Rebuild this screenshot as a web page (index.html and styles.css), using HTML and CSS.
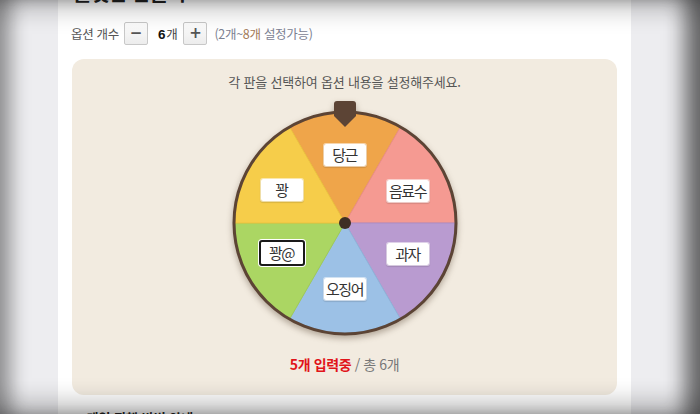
FILE: index.html
```html
<!DOCTYPE html>
<html lang="ko">
<head>
<meta charset="utf-8">
<title>룰렛</title>
<link rel="stylesheet" href="styles.css">
</head>
<body>
<div class="card">
  <h2 class="title">룰렛판 만들기</h2>
  <div class="options">
    <span class="opt-label">옵션 개수</span>
    <button class="step">&#8722;</button>
    <span class="count"><b>6</b>개</span>
    <button class="step">+</button>
    <span class="hint">(2개~<em>8개</em> 설정가능)</span>
  </div>
  <div class="panel">
    <p class="guide">각 판을 선택하여 옵션 내용을 설정해주세요.</p>
    <div class="wheel">
      <svg class="wheel-svg" width="240" height="246" viewBox="0 0 240 246">
        <path d="M120 124 L65 28.74 A110 110 0 0 1 175 28.74 Z" fill="#efa54a" stroke="#e59a40" stroke-width="1"/>
        <path d="M120 124 L175 28.74 A110 110 0 0 1 230 124 Z" fill="#f59a92" stroke="#ea8d86" stroke-width="1"/>
        <path d="M120 124 L230 124 A110 110 0 0 1 175 219.26 Z" fill="#b99bd0" stroke="#ac8dc4" stroke-width="1"/>
        <path d="M120 124 L175 219.26 A110 110 0 0 1 65 219.26 Z" fill="#9cc1e6" stroke="#8fb4da" stroke-width="1"/>
        <path d="M120 124 L65 219.26 A110 110 0 0 1 10 124 Z" fill="#abd663" stroke="#a0cb58" stroke-width="1"/>
        <path d="M120 124 L10 124 A110 110 0 0 1 65 28.74 Z" fill="#f6cd4a" stroke="#ecc23f" stroke-width="1"/>
        <circle cx="120" cy="124" r="111" fill="none" stroke="#5c4435" stroke-width="3"/>
        <path d="M109 5 Q109 2 112 2 L128 2 Q131 2 131 5 L131 17 L120 28 L109 17 Z" fill="#5c4435"/>
        <circle cx="120" cy="124" r="6" fill="#3e2e24"/>
      </svg>
      <span class="tag t1">당근</span>
      <span class="tag t2">음료수</span>
      <span class="tag t3">과자</span>
      <span class="tag t4">오징어</span>
      <span class="tag t5 selected">꽝@</span>
      <span class="tag t6">꽝</span>
    </div>
    <p class="status"><strong>5개 입력중</strong> / 총 6개</p>
  </div>
  <p class="next">• 게임 진행 방법 안내</p>
</div>
<div class="vignette"></div>
</body>
</html>
```
FILE: styles.css
```css
html, body {
  margin: 0;
  padding: 0;
  height: 100%;
  overflow: hidden;
}
body {
  background: #ededf0;
  font-family: "Noto Sans CJK KR", "Liberation Sans", sans-serif;
  color: #444;
}
.card {
  width: 573px;
  margin-left: 58px;
  background: #fff;
  padding: 0 14px;
  box-sizing: border-box;
  min-height: 460px;
}
.title {
  margin: -19px 0 0 1px;
  font-size: 20px;
  line-height: 24px;
  font-weight: 700;
  color: #222;
  letter-spacing: -0.5px;
}
.options {
  display: flex;
  align-items: center;
  height: 24px;
  margin-top: 16px;
  margin-left: -1px;
  font-size: 12.5px;
  letter-spacing: -0.3px;
}
.opt-label {
  color: #555;
  margin-right: 5px;
}
.step {
  width: 24px;
  height: 23px;
  padding: 0;
  border: 1px solid #c8c8c8;
  border-radius: 2px;
  background: linear-gradient(#fdfdfd, #ececec);
  color: #555;
  font-family: "DejaVu Sans", sans-serif;
  font-size: 15px;
  font-weight: 700;
  line-height: 21px;
  text-align: center;
}
.count {
  margin: 0 6px 0 10px;
  color: #444;
}
.count b {
  font-family: "Liberation Sans", sans-serif;
  font-size: 13.5px;
  color: #111;
  margin-right: 1px;
}
.hint {
  margin-left: 7px;
  color: #7c8293;
}
.hint em {
  font-style: normal;
  color: #a47a58;
}
.panel {
  margin-top: 14px;
  background: #f2ebe0;
  border-radius: 12px;
  padding: 14px 0 21px;
  display: flex;
  flex-direction: column;
  align-items: center;
}
.guide {
  margin: 0;
  font-size: 13px;
  line-height: 18px;
  color: #555;
  letter-spacing: -0.2px;
}
.wheel {
  position: relative;
  width: 240px;
  height: 246px;
  margin-top: 8px;
}
.wheel-svg {
  display: block;
  filter: drop-shadow(0 3px 3px rgba(60, 40, 20, 0.35));
}
.tag {
  position: absolute;
  transform: translate(-50%, -50%);
  min-width: 40px;
  height: 22px;
  box-sizing: content-box;
  padding: 0 1px;
  background: #fff;
  background-clip: padding-box;
  border: 1px solid rgba(255, 255, 255, 0.55);
  border-radius: 3px;
  font-size: 15px;
  line-height: 22px;
  letter-spacing: -1.5px;
  text-align: center;
  color: #333;
  white-space: nowrap;
  box-shadow: 0 1px 1px rgba(0, 0, 0, 0.12);
}
.tag.selected {
  border: 2px solid #1a1a1a;
  height: 22px;
  line-height: 22px;
  box-shadow: 0 0 0 1px #fff;
}
.t1 { left: 120px; top: 56px; }
.t2 { left: 183px; top: 91.5px; }
.t3 { left: 183px; top: 154.5px; }
.t4 { left: 120px; top: 190px; }
.t5 { left: 57px; top: 154px; }
.t6 { left: 57px; top: 91px; }
.status {
  margin: 9px 0 0;
  font-size: 14px;
  line-height: 20px;
  color: #777;
  letter-spacing: -0.4px;
}
.status strong {
  color: #e1141a;
  font-weight: 700;
}
.next {
  margin: 13px 0 0 6px;
  font-size: 13px;
  font-weight: 700;
  color: #222;
}
.vignette {
  position: fixed;
  inset: 0;
  pointer-events: none;
  box-shadow:
    inset 20px 0 18px -8px rgba(0, 0, 0, 0.35),
    inset -24px 0 20px -8px rgba(0, 0, 0, 0.55),
    inset 0 24px 22px -12px rgba(0, 0, 0, 0.2),
    inset 0 -24px 22px -10px rgba(0, 0, 0, 0.22);
}
```
